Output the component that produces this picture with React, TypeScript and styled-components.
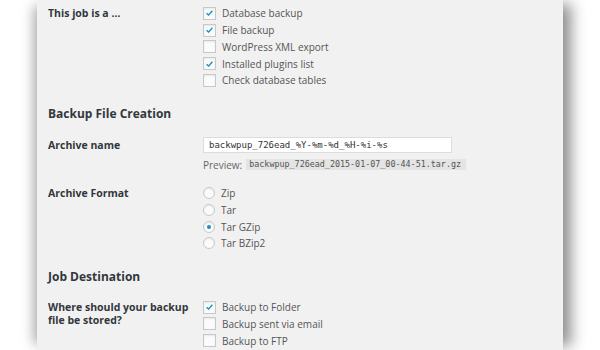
import styled, { createGlobalStyle } from 'styled-components'

const GlobalStyle = createGlobalStyle`
  html, body {
    margin: 0;
    padding: 0;
    background: #ffffff;
  }
  body {
    font-family: "Open Sans", "Liberation Sans", sans-serif;
    color: #444;
  }
`

const Stage = styled.div`
  width: 600px;
  height: 350px;
  overflow: hidden;
  background: #ffffff;
  display: flex;
  justify-content: flex-start;
  padding-left: 37px;
  box-sizing: border-box;
`

const Panel = styled.div`
  width: 526px;
  height: 350px;
  background: #f1f1f1;
  box-sizing: border-box;
  padding: 5px 0 0 11px;
  box-shadow: -9px 0 12px -6px rgba(0, 0, 0, 0.35), 12px 0 14px -4px rgba(0, 0, 0, 0.45);
`

const FormRow = styled.div<{ $top?: number }>`
  display: grid;
  grid-template-columns: 155px 1fr;
  margin-top: ${(p) => p.$top ?? 0}px;
`

const Label = styled.div`
  font-size: 10.5px;
  font-weight: 700;
  color: #32373c;
  line-height: 13px;
  padding-top: 2px;
`

const SectionTitle = styled.h3<{ $top: number }>`
  margin: 0;
  font-size: 12px;
  font-weight: 700;
  color: #32373c;
  line-height: 18px;
  margin-top: ${(p) => p.$top}px;
`

const OptionList = styled.div`
  display: flex;
  flex-direction: column;
`

const Option = styled.label`
  display: flex;
  align-items: center;
  gap: 6px;
  height: 16.75px;
  font-size: 10px;
  color: #555;
  white-space: nowrap;
`

const Box = styled.span`
  width: 11px;
  height: 11px;
  border: 1px solid #c8c8c8;
  background: #fbfbfb;
  box-shadow: inset 0 1px 2px rgba(0, 0, 0, 0.08);
  flex: none;
  display: flex;
  align-items: center;
  justify-content: center;
`

const Round = styled(Box)`
  border-radius: 50%;
  width: 10px;
  height: 10px;
`

const Dot = styled.span`
  width: 4px;
  height: 4px;
  border-radius: 50%;
  background: #1e8cbe;
`

const TextInput = styled.div`
  width: 249px;
  height: 16px;
  box-sizing: border-box;
  border: 1px solid #dcdcdc;
  background: #ffffff;
  font-family: "DejaVu Sans Mono", "Liberation Mono", monospace;
  font-size: 9px;
  color: #333;
  padding: 0 0 0 5px;
  display: flex;
  align-items: center;
`

const Preview = styled.div`
  display: flex;
  align-items: center;
  gap: 4px;
  margin-top: 5px;
  font-size: 10px;
  color: #666;
`

const Code = styled.code`
  background: #e4e4e4;
  font-family: "DejaVu Sans Mono", "Liberation Mono", monospace;
  font-size: 8.4px;
  color: #555;
  padding: 0 3px;
  height: 11px;
  line-height: 11px;
  width: 220px;
  box-sizing: border-box;
  white-space: nowrap;
`

function Check({ checked, label }: { checked?: boolean; label: string }) {
  return (
    <Option>
      <Box>
        {checked && (
          <svg width="9" height="8" viewBox="0 0 9 8">
            <path d="M1.6 4.3 L3.6 6.1 L7.4 1.8" fill="none" stroke="#1e8cbe" strokeWidth="1.4" />
          </svg>
        )}
      </Box>
      {label}
    </Option>
  )
}

function Radio({ checked, label }: { checked?: boolean; label: string }) {
  return (
    <Option>
      <Round>{checked && <Dot />}</Round>
      {label}
    </Option>
  )
}

function App() {
  return (
    <>
      <GlobalStyle />
      <Stage>
        <Panel>
          <FormRow>
            <Label>This job is a ...</Label>
            <OptionList>
              <Check checked label="Database backup" />
              <Check checked label="File backup" />
              <Check label="WordPress XML export" />
              <Check checked label="Installed plugins list" />
              <Check label="Check database tables" />
            </OptionList>
          </FormRow>

          <SectionTitle $top={16}>Backup File Creation</SectionTitle>

          <FormRow $top={14}>
            <Label>Archive name</Label>
            <div>
              <TextInput>backwpup_726ead_%Y-%m-%d_%H-%i-%s</TextInput>
              <Preview>
                Preview: <Code>backwpup_726ead_2015-01-07_00-44-51.tar.gz</Code>
              </Preview>
            </div>
          </FormRow>

          <FormRow $top={13}>
            <Label>Archive Format</Label>
            <OptionList>
              <Radio label="Zip" />
              <Radio label="Tar" />
              <Radio checked label="Tar GZip" />
              <Radio label="Tar BZip2" />
            </OptionList>
          </FormRow>

          <SectionTitle $top={16}>Job Destination</SectionTitle>

          <FormRow $top={13}>
            <Label>
              Where should your backup
              <br />
              file be stored?
            </Label>
            <OptionList>
              <Check checked label="Backup to Folder" />
              <Check label="Backup sent via email" />
              <Check label="Backup to FTP" />
            </OptionList>
          </FormRow>
        </Panel>
      </Stage>
    </>
  )
}

export default App
